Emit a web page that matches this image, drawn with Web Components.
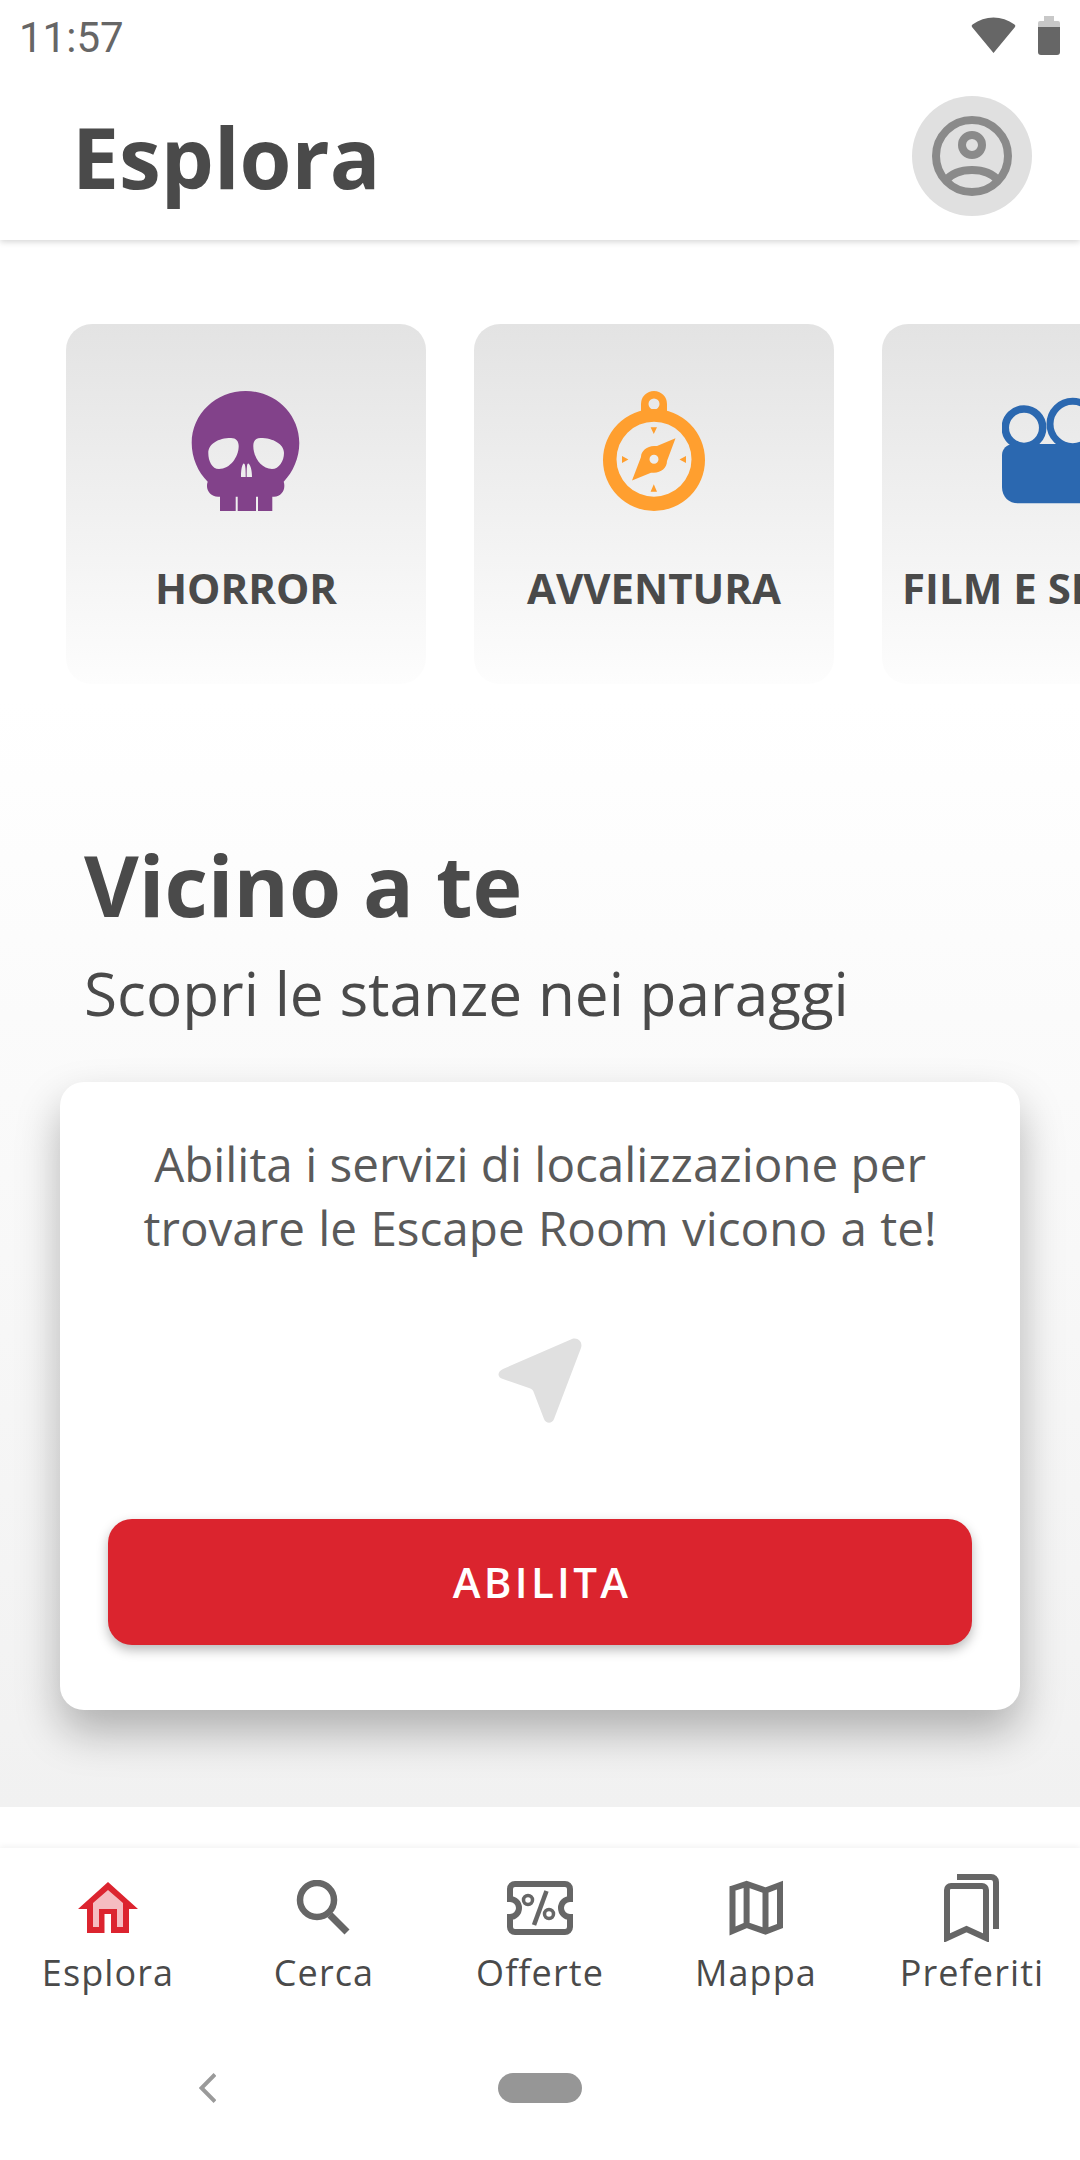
<!DOCTYPE html>
<html lang="it">
<head>
<meta charset="utf-8">
<title>Esplora</title>
<style>
  html, body { margin: 0; padding: 0; background: #fff; }
  body { font-family: "Open Sans", sans-serif; color: #4a4a4a; width: 1080px; height: 2160px; overflow: hidden; }
</style>
</head>
<body>
<app-screen>
  <status-bar></status-bar>
  <app-header title-text="Esplora"></app-header>
  <explore-body>
    <category-row>
      <category-card label="HORROR" icon="skull"></category-card>
      <category-card label="AVVENTURA" icon="compass"></category-card>
      <category-card label="FILM E SERIE TV" icon="film"></category-card>
    </category-row>
    <section-title heading="Vicino a te" sub="Scopri le stanze nei paraggi"></section-title>
    <location-card>Abilita i servizi di localizzazione per<br><span style="word-spacing: 1px">trovare le Escape Room vicono a te!</span></location-card>
  </explore-body>
  <tab-bar>
    <tab-item label="Esplora" icon="home"></tab-item>
    <tab-item label="Cerca" icon="search"></tab-item>
    <tab-item label="Offerte" icon="ticket"></tab-item>
    <tab-item label="Mappa" icon="map"></tab-item>
    <tab-item label="Preferiti" icon="bookmark"></tab-item>
  </tab-bar>
  <system-nav></system-nav>
</app-screen>

<script>
const ICONS = {
  skull: `<svg width="120" height="120" viewBox="0 0 120 120">
    <path fill="#82428a" fill-rule="evenodd" d="M59.7 0C30 0 5.700 23 5.700 52C5.700 67 12 81 21.700 90.700C19 98 24 105.700 32 105.700H34V120H49.700V105.700H51.700V120H70V105.700H72V120H86.300V105.700H88C96 105.700 100 98 97.700 90.700C107 81 113.300 67 113.300 52C113.300 23 89 0 59.700 0Z
      M22.300 62C22.300 53 32 47 45 47C50 47 52.700 50 52.700 55C52.700 66 44 78 33 78C26 78 22.300 70 22.300 62Z
      M98 62C98 53 87 47 74.500 47C69.500 47 67.300 50 67.300 55C67.300 66 75 78 86 78C93 78 98 70 98 62Z
      M55 86C55 80 55.500 75 57.500 72.500C59 72 59.700 75 59.700 86Z
      M60.700 86C60.700 75 61 72 62.500 72.500C65 75 66 80 66 86Z"/></svg>`,
  compass: `<svg width="120" height="120" viewBox="0 0 120 120">
    <g fill="#ff9f2f">
      <path fill-rule="evenodd" d="M60 0A13 13 0 0 1 73 13V23H47V13A13 13 0 0 1 60 0ZM60 7.500A5.500 5.500 0 1 0 60 18.500A5.500 5.500 0 1 0 60 7.500Z"/>
      <path fill-rule="evenodd" d="M60 18A51 51 0 1 0 60 120A51 51 0 1 0 60 18ZM60 30.700A37.500 37.500 0 1 1 60 105.700A37.500 37.500 0 1 1 60 30.700Z"/>
      <path fill-rule="evenodd" d="M81.500 47.300 73 70C73 77 67 81.700 60 81.700H57L38 89.500 47 66C47 60 53 55 60 55H63ZM60 63.800A4.500 4.500 0 1 0 60 72.800A4.500 4.500 0 1 0 60 63.800Z"/>
      <path d="M56.600 36.300H63L59.800 43ZM56.600 100.700H63L59.800 93.300ZM28 65v7l6.400-3.500ZM92 65v7l-6.500-3.500Z"/>
    </g></svg>`,
  film: `<svg width="120" height="120" viewBox="0 0 120 120">
    <g fill="none" stroke="#2b68b0"><circle cx="22" cy="36.700" r="18.700" stroke-width="7.500"/><circle cx="70.700" cy="33" r="22.700" stroke-width="7"/></g>
    <path fill="#2b68b0" d="M11 53H120V112.300H16C7 112.300 0 106 0 96V64C0 58 5 53 11 53Z"/></svg>`,
  home: `<svg width="60" height="52" viewBox="0 0 60 52">
    <path fill="#dc242f" d="M30 0 60 27H51V51H9V27H0z"/>
    <path fill="#f5bcc1" d="M30 8 45 21V45H39V27H21V45H15V21z"/>
    <rect x="26.500" y="32" width="6.500" height="19" fill="#fff"/></svg>`,
  search: `<svg width="56" height="56" viewBox="0 0 56 56">
    <circle cx="21" cy="20" r="17" fill="none" stroke="#666" stroke-width="6.500"/>
    <path d="M34 35 51 52" fill="none" stroke="#666" stroke-width="7"/></svg>`,
  ticket: `<svg width="68" height="56" viewBox="0 0 68 56">
    <path fill="none" stroke="#666" stroke-width="6" d="M9 4H59a5 5 0 0 1 5 5V19a9 9 0 0 0 0 18V47a5 5 0 0 1-5 5H9a5 5 0 0 1-5-5V37a9 9 0 0 0 0-18V9a5 5 0 0 1 5-5z"/>
    <circle cx="22" cy="20" r="4.500" fill="none" stroke="#666" stroke-width="3.500"/>
    <circle cx="43" cy="34" r="4.500" fill="none" stroke="#666" stroke-width="3.500"/>
    <path d="M40.500 11 28 45" fill="none" stroke="#666" stroke-width="4.500"/></svg>`,
  map: `<svg width="56" height="56" viewBox="0 0 56 56">
    <path fill="none" stroke="#666" stroke-width="6" d="M4.500 8.500 18.600 4 37.500 10.500 52 5V46L37.500 51.500 18.600 45 4.500 51ZM18.600 4V45M37.500 10.500V51.500"/></svg>`,
  bookmark: `<svg width="56" height="68" viewBox="0 0 56 68">
    <path fill="none" stroke="#666" stroke-width="6" d="M3 64V16a4 4 0 0 1 4-4H38a4 4 0 0 1 4 4V64L22.500 55z"/>
    <path fill="none" stroke="#666" stroke-width="6" d="M13 3H47a5 5 0 0 1 5 5V55"/></svg>`
};

class AppScreen extends HTMLElement {
  constructor() {
    super();
    this.attachShadow({ mode: "open" }).innerHTML = `
      <style>
        :host { display: flex; flex-direction: column; width: 1080px; height: 2160px; overflow: hidden; background: #fff; }
      </style>
      <slot></slot>`;
  }
}

class StatusBar extends HTMLElement {
  constructor() {
    super();
    this.attachShadow({ mode: "open" }).innerHTML = `
      <style>
        :host { display: flex; align-items: center; justify-content: space-between; flex: none; height: 72px; padding: 0 20px 0 19px; box-sizing: border-box; background: #fff; position: relative; z-index: 3; }
        .time { font: 400 42px/72px Roboto, sans-serif; color: #666; position: relative; top: 2px; }
        .icons { display: flex; gap: 22px; align-items: flex-start; height: 40px; }
        .wifi { margin-top: 1px; }
      </style>
      <span class="time">11:57</span>
      <span class="icons">
        <svg class="wifi" width="45" height="37" viewBox="0 0 45 37"><path fill="#666" d="M22.500 36 1 10Q0 8.500 1.500 7.500C8 3 15 0.500 22.500 0.500S37 3 43.500 7.500Q45 8.500 44 10z"/></svg>
        <svg width="22" height="39" viewBox="0 0 22 39"><path fill="#c8c8c8" d="M6 0h10v5h4a2 2 0 0 1 2 2v5H0V7a2 2 0 0 1 2-2h4z"/><path fill="#666" d="M0 11h22v25a3 3 0 0 1-3 3H3a3 3 0 0 1-3-3z"/></svg>
      </span>`;
  }
}

class AppHeader extends HTMLElement {
  constructor() {
    super();
    this.attachShadow({ mode: "open" }).innerHTML = `
      <style>
        :host { display: flex; align-items: center; justify-content: space-between; flex: none; height: 168px; padding: 0 48px 0 72px; box-sizing: border-box; background: #fff; box-shadow: 0 2px 6px rgba(0,0,0,.16); position: relative; z-index: 2; }
        h1 { margin: 2px 0 0; font: 700 84px/1 "Open Sans", sans-serif; color: #4a4a4a; }
        .avatar { display: flex; align-items: center; justify-content: center; width: 120px; height: 120px; border-radius: 50%; background: #e0e0e0; }
      </style>
      <h1></h1>
      <div class="avatar">
        <svg width="80" height="80" viewBox="0 0 80 80" fill="none" stroke="#8a8a8a" stroke-width="8">
          <circle cx="40" cy="40" r="36"/><circle cx="40" cy="29" r="10"/>
          <path d="M13 65C20 57 30 54 40 54S60 57 67 65"/>
        </svg>
      </div>`;
    this.shadowRoot.querySelector("h1").textContent = this.getAttribute("title-text");
  }
}

class ExploreBody extends HTMLElement {
  constructor() {
    super();
    this.attachShadow({ mode: "open" }).innerHTML = `
      <style>
        :host { display: block; flex: none; height: 1567px; background: linear-gradient(#fff 0, #fff 460px, #f1f1f1 100%); overflow: hidden; }
      </style>
      <slot></slot>`;
  }
}

class CategoryRow extends HTMLElement {
  constructor() {
    super();
    this.attachShadow({ mode: "open" }).innerHTML = `
      <style>
        :host { display: flex; gap: 48px; padding: 84px 0 0 66px; overflow: hidden; }
      </style>
      <slot></slot>`;
  }
}

class CategoryCard extends HTMLElement {
  constructor() {
    super();
    this.attachShadow({ mode: "open" }).innerHTML = `
      <style>
        :host { display: flex; flex: none; flex-direction: column; align-items: center; width: 360px; height: 360px; padding-top: 67px; box-sizing: border-box; border-radius: 26px; background: linear-gradient(#e3e3e3, #fdfdfd); }
        .icon { height: 120px; width: 120px; }
        .label { margin-top: 47px; font: 700 42px/60px "Open Sans", sans-serif; color: #4a4a4a; white-space: nowrap; }
      </style>
      <div class="icon"></div>
      <div class="label"></div>`;
    this.shadowRoot.querySelector(".icon").innerHTML = ICONS[this.getAttribute("icon")];
    this.shadowRoot.querySelector(".label").textContent = this.getAttribute("label");
  }
}

class SectionTitle extends HTMLElement {
  constructor() {
    super();
    this.attachShadow({ mode: "open" }).innerHTML = `
      <style>
        :host { display: block; padding: 151px 0 0 84px; }
        h2 { margin: 0; font: 700 84.300px/100px "Open Sans", sans-serif; color: #4a4a4a; }
        p { margin: 17px 0 0; font: 400 60.300px/82px "Open Sans", sans-serif; color: #4a4a4a; }
      </style>
      <h2></h2><p></p>`;
    this.shadowRoot.querySelector("h2").textContent = this.getAttribute("heading");
    this.shadowRoot.querySelector("p").textContent = this.getAttribute("sub");
  }
}

class LocationCard extends HTMLElement {
  constructor() {
    super();
    this.attachShadow({ mode: "open" }).innerHTML = `
      <style>
        :host { display: block; margin: 48px 60px 0; height: 628px; box-sizing: border-box; padding: 50px 48px 0; background: #fff; border-radius: 24px; box-shadow: 0 22px 44px rgba(0,0,0,.28); }
        .msg { text-align: center; font: 400 47.600px/64px "Open Sans", sans-serif; color: #5a5a5a; }
        .arrow { display: flex; justify-content: center; margin-top: 78px; }
        button { display: block; width: 100%; height: 126px; margin-top: 95px; padding: 0 0 0 4px; border: 0; border-radius: 24px; background: #db242e; color: #fff; font: 600 42px/1 "Open Sans", sans-serif; letter-spacing: 3.300px; box-shadow: 0 5px 12px rgba(0,0,0,.28); }
      </style>
      <div class="msg"><slot></slot></div>
      <div class="arrow">
        <svg width="84" height="86" viewBox="0 0 84 86"><path fill="#e0e0e0" d="M74 1 5 31c-6 3-6 8 0 10l26 9c3 1 4 2 5 5l10 26c2 5 8 5 10 0L83 10c2-6-3-11-9-9z"/></svg>
      </div>
      <button>ABILITA</button>`;
  }
}

class TabBar extends HTMLElement {
  constructor() {
    super();
    this.attachShadow({ mode: "open" }).innerHTML = `
      <style>
        :host { display: grid; grid-template-columns: repeat(5, 216px); flex: none; height: 212px; margin-top: 41px; background: #fff; box-shadow: 0 -2px 6px rgba(0,0,0,.05); }
      </style>
      <slot></slot>`;
  }
}

class TabItem extends HTMLElement {
  constructor() {
    super();
    this.attachShadow({ mode: "open" }).innerHTML = `
      <style>
        :host { display: flex; flex-direction: column; align-items: center; }
        .icon { display: flex; align-items: center; justify-content: center; height: 68px; margin-top: 26px; }
        svg { display: block; }
        .label { margin-top: 6px; font: 400 36px/50px "Open Sans", sans-serif; letter-spacing: 1.100px; color: #4a4a4a; white-space: nowrap; }
      </style>
      <div class="icon"></div>
      <div class="label"></div>`;
    this.shadowRoot.querySelector(".icon").innerHTML = ICONS[this.getAttribute("icon")];
    this.shadowRoot.querySelector(".label").textContent = this.getAttribute("label");
  }
}

class SystemNav extends HTMLElement {
  constructor() {
    super();
    this.attachShadow({ mode: "open" }).innerHTML = `
      <style>
        :host { display: grid; grid-template-columns: 1fr; flex: none; height: 100px; padding-top: 13px; box-sizing: border-box; background: #fff; }
        .row { display: flex; align-items: center; height: 30px; padding-left: 199px; }
        .pill { width: 84px; height: 30px; margin-left: 282px; border-radius: 15px; background: #969696; }
      </style>
      <div class="row">
        <svg width="17" height="30" viewBox="0 0 17 30"><path fill="none" stroke="#9a9a9a" stroke-width="4" d="M16 1.500 2.500 15 16 28.500"/></svg>
        <div class="pill"></div>
      </div>`;
  }
}

customElements.define("app-screen", AppScreen);
customElements.define("status-bar", StatusBar);
customElements.define("app-header", AppHeader);
customElements.define("explore-body", ExploreBody);
customElements.define("category-row", CategoryRow);
customElements.define("category-card", CategoryCard);
customElements.define("section-title", SectionTitle);
customElements.define("location-card", LocationCard);
customElements.define("tab-bar", TabBar);
customElements.define("tab-item", TabItem);
customElements.define("system-nav", SystemNav);
</script>
</body>
</html>
